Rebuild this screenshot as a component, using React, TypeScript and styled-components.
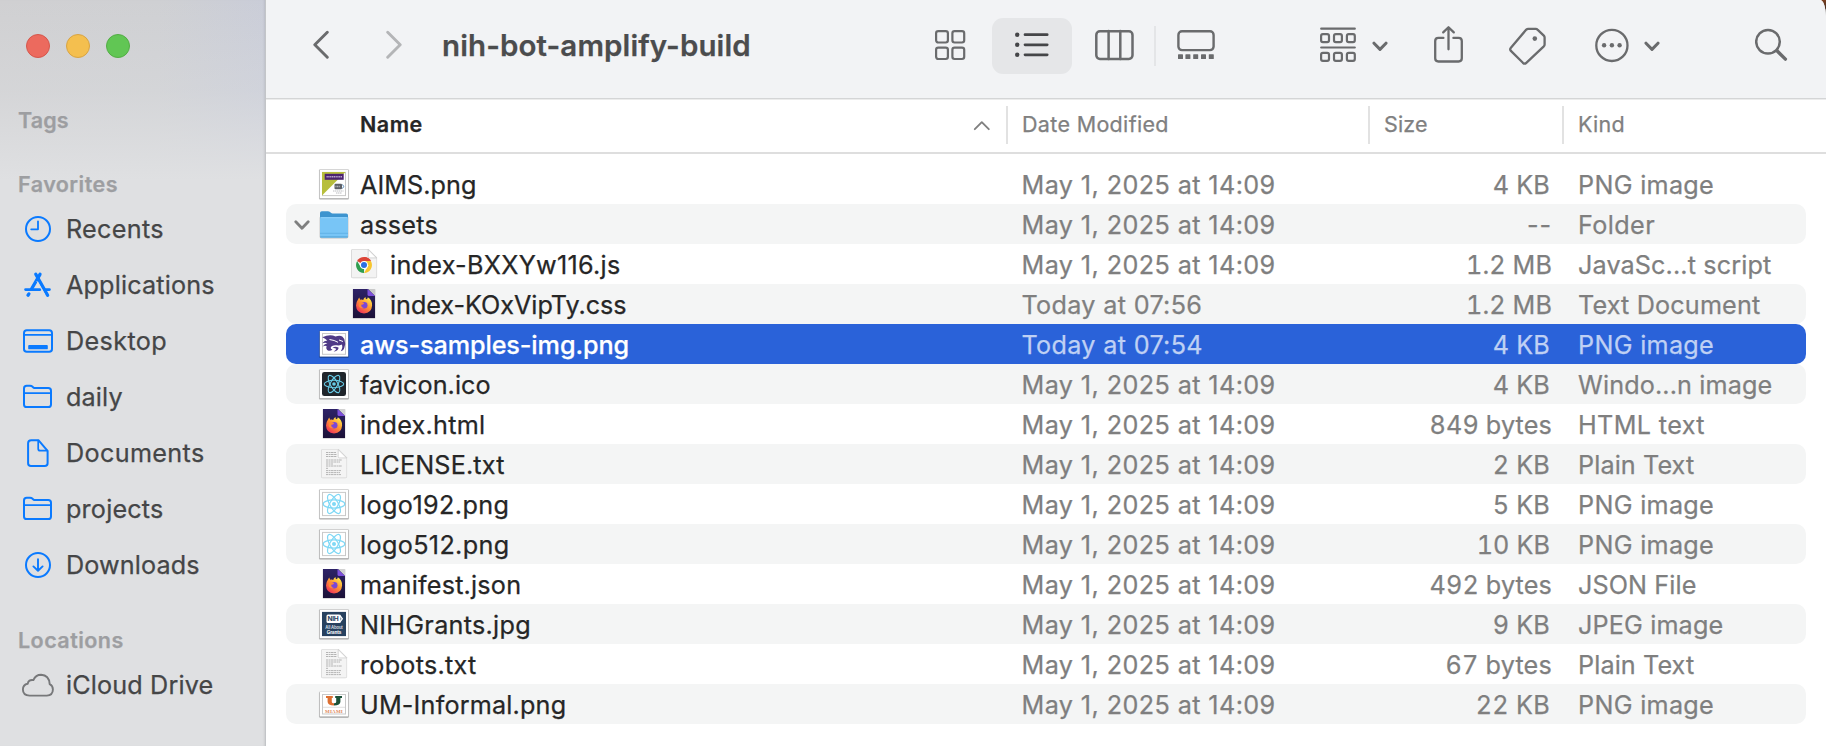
import React from "react";
import styled, { createGlobalStyle, css } from "styled-components";

const GlobalStyle = createGlobalStyle`
  * { box-sizing: border-box; }
  html, body { margin: 0; padding: 0; }
  body { overflow: hidden; font-family: Inter, "Liberation Sans", sans-serif; -webkit-text-stroke: 0.25px currentColor; }
  svg { display: block; flex: none; }
  svg text { -webkit-text-stroke: 0; }
`;

const Backdrop = styled.div`
  width: 100vw;
  height: 100vh;
  background: linear-gradient(#7d4122 0, #2a2522 12px, #cfcfcf 40px);
`;

const Window = styled.div`
  display: flex;
  height: 100%;
  background: #fff;
  border-top-right-radius: 6px 17px;
  overflow: hidden;
`;

/* ---------- Sidebar ---------- */

const Sidebar = styled.aside`
  flex: none;
  width: 266px;
  padding-top: 34px;
  border-right: 1px solid #c3c5c8;
  background:
    linear-gradient(180deg, rgba(223, 225, 227, 0) 0, rgba(223, 225, 227, 0.3) 90px, #dfe0e2 180px),
    linear-gradient(90deg, #d0d0d2 0, #cfd0d3 60%, #cacdd8 100%);
  box-shadow: inset -2px 0 2px -1px rgba(0, 0, 0, 0.08);
`;

const TrafficLights = styled.div`
  display: flex;
  gap: 16px;
  padding-left: 26px;
  margin-bottom: 45px;
`;

const Light = styled.span<{ $fill: string; $edge: string }>`
  width: 24px;
  height: 24px;
  border-radius: 50%;
  background: ${(p) => p.$fill};
  border: 1px solid ${(p) => p.$edge};
`;

const SectionLabel = styled.div<{ $ls: number }>`
  height: 34px;
  padding-left: 18px;
  font-size: 21.5px;
  font-weight: 600;
  line-height: 34px;
  letter-spacing: ${(p) => p.$ls}px;
  color: #9d9ea1;
`;

const Section = styled.section<{ $gap: number }>`
  margin-bottom: ${(p) => p.$gap}px;
`;

const SidebarItem = styled.div<{ $ls: number }>`
  display: flex;
  align-items: center;
  height: 56px;
  padding-left: 20px;
  gap: 10px;
  font-size: 25.2px;
  letter-spacing: ${(p) => p.$ls}px;
  color: #454647;
  white-space: nowrap;
`;

/* ---------- Toolbar ---------- */

const Main = styled.main`
  flex: 1;
  min-width: 0;
  display: flex;
  flex-direction: column;
`;

const Toolbar = styled.header`
  display: flex;
  align-items: center;
  height: 100px;
  padding: 0 38px 7px 47px;
  background: #f2f3f5;
  border-bottom: 1px solid #ececec;
  box-shadow: inset 0 -1px 0 #d4d5d6;
  color: #6a6b6d;
`;

const Title = styled.h1`
  flex: 1;
  margin: 0 0 0 40px;
  padding-bottom: 2px;
  font-size: 29.5px;
  font-weight: 600;
  letter-spacing: 0.1px;
  color: #4b4c4d;
`;

const Tool = styled.span<{ $ml?: number; $dim?: boolean }>`
  display: flex;
  margin-left: ${(p) => p.$ml ?? 0}px;
  ${(p) => p.$dim && css`color: #b4b5b7;`}
`;

const ActiveTool = styled.span`
  display: flex;
  align-items: center;
  justify-content: center;
  width: 80px;
  height: 56px;
  margin-left: 26px;
  border-radius: 11px;
  background: #e5e6e8;
  color: #454648;
`;

const ToolDivider = styled.span`
  width: 2px;
  height: 40px;
  margin-left: 20px;
  background: #e4e5e7;
`;

/* ---------- List ---------- */

const ColumnHeader = styled.div`
  display: grid;
  grid-template-columns: 740px 362px 194px 1fr;
  height: 54px;
  padding-top: 6px;
  border-bottom: 2px solid #dedede;
  font-size: 21.5px;
  color: #808080;
`;

const HeaderCell = styled.div<{ $ls: number; $first?: boolean }>`
  display: flex;
  align-items: center;
  justify-content: space-between;
  height: 38px;
  padding-left: 14px;
  padding-bottom: 3px;
  border-left: 2px solid #e2e2e2;
  letter-spacing: ${(p) => p.$ls}px;
  ${(p) =>
    p.$first &&
    css`
      padding-left: 94px;
      padding-right: 15px;
      border-left: 0;
      font-weight: 600;
      color: #262626;
    `}
`;

const Rows = styled.div`
  padding: 10px 20px 0 20px;
`;

const Row = styled.div<{ $alt: boolean; $selected?: boolean }>`
  display: grid;
  grid-template-columns: 735.5px 340px 190.5px 26px 1fr;
  height: 40px;
  border-radius: 10px;
  font-size: 25.2px;
  line-height: 42px;
  white-space: nowrap;
  color: #7f7f7f;
  background: ${(p) => (p.$alt ? "#f4f5f5" : "transparent")};
  ${(p) =>
    p.$selected &&
    css`
      background: #2a62d9;
      color: #bfd0f4;
    `}
`;

const NameCell = styled.div<{ $ls: number; $nested?: boolean; $selected?: boolean }>`
  display: flex;
  height: 40px;
  padding-left: ${(p) => (p.$nested ? 38 : 8)}px;
  letter-spacing: ${(p) => p.$ls}px;
  font-weight: ${(p) => (p.$selected ? 500 : 400)};
  color: ${(p) => (p.$selected ? "#fff" : "#262626")};
`;

const Disclosure = styled.span`
  width: 16px;
  margin: 12px 8px 0 0;
`;

const FileIcon = styled.span`
  width: 32px;
  margin: 4px 10px 0 0;
`;

const Cell = styled.span<{ $ls: number }>`
  letter-spacing: ${(p) => p.$ls}px;
`;

const SizeCell = styled(Cell)<{ $inset: number; $tabular: boolean }>`
  padding-right: ${(p) => p.$inset}px;
  text-align: right;
  font-variant-numeric: ${(p) => (p.$tabular ? "tabular-nums" : "normal")};
`;

/* ---------- Toolbar glyphs ---------- */

type GlyphProps = { w: number; sw?: number; children: React.ReactNode };

const Glyph = ({ w, sw = 2.4, children }: GlyphProps) => (
  <svg
    width={w}
    height={48}
    viewBox={`0 0 ${w} 48`}
    fill="none"
    stroke="currentColor"
    strokeWidth={sw}
    strokeLinecap="round"
    strokeLinejoin="round"
  >
    {children}
  </svg>
);

const BackGlyph = () => (
  <Glyph w={16} sw={2.9}><path d="M14.3 10.3L1.8 22.700l12.5 12.5" /></Glyph>
);
const ForwardGlyph = () => (
  <Glyph w={16} sw={2.9}><path d="M1.7 10.3L14.2 22.700L1.7 35.200" /></Glyph>
);
const GridGlyph = () => (
  <Glyph w={31} sw={2.2}>
    <rect x="1.1" y="9.1" width="11.8" height="11.4" rx="2.2" />
    <rect x="17.4" y="9.1" width="11.8" height="11.4" rx="2.2" />
    <rect x="1.1" y="25.6" width="11.8" height="11.4" rx="2.2" />
    <rect x="17.4" y="25.6" width="11.8" height="11.4" rx="2.2" />
  </Glyph>
);
const ListGlyph = () => (
  <Glyph w={34} sw={2.7}>
    {[12.7, 22.8, 32.8].map((y) => (
      <React.Fragment key={y}>
        <circle cx="2.2" cy={y} r="2.2" fill="currentColor" stroke="none" />
        <path d={`M10 ${y}h22.2`} />
      </React.Fragment>
    ))}
  </Glyph>
);
const ColumnsGlyph = () => (
  <Glyph w={39} sw={2.5}>
    <rect x="1.3" y="9.3" width="36.2" height="27.6" rx="3.6" />
    <path d="M13.6 9v28M25.3 9v28" />
  </Glyph>
);
const GalleryGlyph = () => (
  <Glyph w={38} sw={2.4}>
    <rect x="1.4" y="9.3" width="35.2" height="18.8" rx="3.6" />
    {[1, 8.4, 16.2, 24, 31.8].map((x) => (
      <rect key={x} x={x} y="32.2" width="5" height="4.8" rx="0.6" fill="currentColor" stroke="none" />
    ))}
  </Glyph>
);
const GroupGlyph = () => (
  <Glyph w={36} sw={2.2}>
    <path d="M1.2 6.7h33.6M1.2 25.5h33.6" />
    {[12.1, 30.8].map((y) =>
      [1.1, 14, 26.9].map((x) => (
        <rect key={`${x}-${y}`} x={x} y={y} width="7.9" height="8" rx="1.8" />
      )),
    )}
  </Glyph>
);
const ChevronGlyph = () => (
  <Glyph w={16} sw={3}><path d="M2 21.2l6 6.2l6-6.2" /></Glyph>
);
const ShareGlyph = () => (
  <Glyph w={29} sw={2.3}>
    <path d="M9.4 15.9H4.400q-3.200 0-3.200 3.200v17.200q0 3.200 3.200 3.200h20.200q3.200 0 3.200-3.200V19.100q0-3.200-3.200-3.200h-5.200" />
    <path d="M14.5 27.3V5.6M9.200 10.4l5.3-5.2l5.3 5.2" />
  </Glyph>
);
const TagGlyph = () => (
  <Glyph w={37} sw={2.3}>
    <path d="M19.1 6.9h7.7q1 0 1.7.7l6.300 6q.8.8.8 1.8v7q0 1.1-.8 1.900L17.300 40.8q-1.7 1.6-3.4 0L1.900 28.900q-1.4-1.6 0-3.200L17.300 7.6q.8-.7 1.8-.7z" />
    <circle cx="25.8" cy="16.6" r="2.3" fill="currentColor" stroke="none" />
  </Glyph>
);
const MoreGlyph = () => (
  <Glyph w={34} sw={2.3}>
    <circle cx="16.9" cy="23.4" r="15.6" />
    {[9.1, 16.9, 24.6].map((x) => (
      <circle key={x} cx={x} cy="23.200" r="2.2" fill="currentColor" stroke="none" />
    ))}
  </Glyph>
);
const SearchGlyph = () => (
  <Glyph w={33} sw={2.5}>
    <circle cx="13" cy="19.8" r="11.8" />
    <path d="M22 28.8l8.400 8.300" strokeWidth="3.4" />
  </Glyph>
);

/* ---------- Sidebar glyphs ---------- */

const SideGlyph = ({ children, color = "#0a7aff" }: { children: React.ReactNode; color?: string }) => (
  <svg width="36" height="32" viewBox="0 0 36 32" fill="none" stroke={color} strokeWidth="2" strokeLinecap="round" strokeLinejoin="round">
    {children}
  </svg>
);

const ClockGlyph = () => (
  <SideGlyph>
    <circle cx="18" cy="16" r="12" />
    <path d="M18 8.3V16.3H11.2" strokeWidth="1.8" />
  </SideGlyph>
);
const AppsGlyph = () => (
  <SideGlyph>
    <path d="M15.8 5.3L27.6 26.2" strokeWidth="3.3" />
    <path d="M20 5.3L11.5 20" strokeWidth="3.3" />
    <path d="M5.6 20.6h14.4M25.8 20.6h3.6" strokeWidth="2.9" />
    <path d="M8.9 24.9l-.9 1.3" strokeWidth="3.3" />
    <path d="M19 11.5l7 12" stroke="#dfe0e2" strokeWidth="1" transform="translate(-1.9 1.1)" />
  </SideGlyph>
);
const DesktopGlyph = () => (
  <SideGlyph>
    <rect x="4" y="5.2" width="28" height="21.6" rx="2.8" />
    <path d="M4 9.9h28" strokeWidth="1.6" />
    <rect x="8.2" y="20" width="19.6" height="4.3" rx="0.9" fill="#0a7aff" stroke="none" />
  </SideGlyph>
);
const FolderGlyph = () => (
  <SideGlyph>
    <path d="M4 23.4V7.4q0-2.7 2.7-2.7h3.4q1.3 0 2.2.8l1 .9q.8.7 2 .7h12.9q2.8 0 2.8 2.7v13.6q0 2.7-2.8 2.7H6.7q-2.7 0-2.7-2.7z" />
    <path d="M4 12.1h27" strokeWidth="1.6" />
  </SideGlyph>
);
const DocumentGlyph = () => (
  <SideGlyph>
    <path d="M18.4 3.2h-7.1q-3.2 0-3.2 3v20q0 2.8 2.9 2.8h13.7q2.9 0 2.9-2.8V13.8L18.4 3.2z" />
    <path d="M18.2 3.5v8.2q0 2 2 2h7" strokeWidth="1.7" />
  </SideGlyph>
);
const DownloadGlyph = () => (
  <SideGlyph>
    <circle cx="18" cy="16" r="12" />
    <path d="M18 10.2v11.3M13.4 17.4l4.6 4.4l4.6-4.4" strokeWidth="1.9" />
  </SideGlyph>
);
const CloudGlyph = () => (
  <SideGlyph color="#77787a">
    <path d="M9.6 26.6q-6.7-.2-6.7-6q0-4.8 4.8-5.8q.7-4.5 5.7-3.7q2.2-5.3 7.7-5.3q7.900.3 8.600 9.300q3.200 1.600 3.200 5.500q0 5.700-6.100 6z" strokeWidth="1.9" />
  </SideGlyph>
);

/* ---------- File icons ---------- */

const FileSvg = ({ children }: { children: React.ReactNode }) => (
  <svg width="32" height="32" viewBox="0 0 32 32" fill="none">{children}</svg>
);

const Frame = ({ y = 1.7, h = 28.6 }: { y?: number; h?: number }) => (
  <>
    <rect x="0.9" y={y - 0.5} width="30.2" height={h + 1.9} rx="1" fill="#000" opacity="0.12" />
    <rect x="1.4" y={y - 0.1} width="29.2" height={h + 1} rx="0.8" fill="#000" opacity="0.3" />
    <rect x="1.8" y={y} width="28.4" height={h} fill="#fff" />
  </>
);

const AimsIcon = () => (
  <FileSvg>
    <Frame />
    <rect x="4.5" y="4.4" width="23" height="23.2" stroke="#c9c9c9" />
    <path d="M4 4h23.5L4 27.5z" fill="#b7be3c" />
    <rect x="6.7" y="5.8" width="19" height="6" fill="#4c2370" />
    <path d="M8.5 8.8h15.5" stroke="#b9a6cc" strokeWidth="1.4" strokeDasharray="1.3 .5" />
    <rect x="16.5" y="15.8" width="7.5" height="5.4" rx="1" fill="#5d6067" />
    <path d="M17.5 18.5h4.5" stroke="#b9bbc0" strokeWidth="1.5" strokeDasharray="1 .6" />
    <path d="M24.5 16.5l1.2 2l-1.2 2" stroke="#5588b8" />
    <path d="M15 23h10.5M18 25h5.5" stroke="#a9abb0" strokeWidth=".8" strokeDasharray="1.5 .5" />
  </FileSvg>
);

const AssetsFolderIcon = () => (
  <FileSvg>
    <rect x="1.6" y="8" width="28.8" height="22.6" rx="1.8" fill="#000" opacity=".22" />
    <path d="M2 5q0-1.8 1.8-1.8h6.2q1 0 1.7.6l1.2 1q.7.6 1.7.6h13.6q1.8 0 1.8 1.8V14H2z" fill="#3d94cf" />
    <path d="M2 10.6q0-1.5 1.5-1.5h25q1.5 0 1.5 1.5V28q0 1.7-1.7 1.7H3.7Q2 29.7 2 28z" fill="#78c5f6" />
    <path d="M2.4 9.7h27.2" stroke="#93d3fa" strokeWidth=".8" />
    <path d="M2 25.3h28" stroke="#5fb0e4" strokeWidth=".9" />
    <path d="M2.2 28.9h27.6" stroke="#58a8dc" strokeWidth="1.2" />
  </FileSvg>
);

const ChromeDocIcon = () => (
  <FileSvg>
    <path d="M3 2.6q0-1.7 1.7-1.7h15.9l8.5 8.7v19q0 1.7-1.7 1.7H4.7Q3 30.3 3 28.6z" fill="#cfcfcf" />
    <path d="M3.7 2.8q0-1.2 1.2-1.2h15.3l8.3 8.3v18.5q0 1.2-1.2 1.2H4.9q-1.2 0-1.2-1.2z" fill="#f3f3f3" />
    <path d="M20.2 1.6v7q0 1.3 1.3 1.3h7z" fill="#fff" stroke="#c4c4c4" strokeWidth=".7" />
    <path d="M16 17L9.1 13A8 8 0 0 1 22.9 13z" fill="#dc4437" />
    <path d="M16 25L19.5 19L22.9 13A8 8 0 0 1 16 25z" fill="#f7c62f" />
    <path d="M16 17h6.9V13H16z" fill="#f7c62f" />
    <path d="M9.1 13l3.5 6L16 21v4A8 8 0 0 1 9.1 13z" fill="#2f9e50" />
    <path d="M16 9a8 8 0 0 1 6.9 4H16z" fill="#dc4437" />
    <circle cx="16" cy="17" r="3.9" fill="#fff" />
    <circle cx="16" cy="17" r="3" fill="#2b6fe3" />
  </FileSvg>
);

const FirefoxDocIcon = () => (
  <FileSvg>
    <defs>
      <linearGradient id="ffDoc" x1="0" y1="0" x2="0" y2="1">
        <stop offset="0" stopColor="#2d2266" />
        <stop offset="1" stopColor="#1c1238" />
      </linearGradient>
      <linearGradient id="ffFlame" x1="0.85" y1="0.05" x2="0.2" y2="0.95">
        <stop offset="0" stopColor="#fff04e" />
        <stop offset="0.45" stopColor="#ff9833" />
        <stop offset="1" stopColor="#f0305a" />
      </linearGradient>
    </defs>
    <rect x="4.6" y="1" width="22.8" height="29.8" rx=".8" fill="#000" opacity=".18" />
    <path d="M5 1h15l7 7v22H5z" fill="url(#ffDoc)" />
    <path d="M19.5 1v5.5q0 1.5 1.5 1.5h6z" fill="#7c4fdc" />
    <path d="M10 11.5q.8-1.3 1.2-2l1 2.2q1.7-.6 3 .2q.5-2 2.3-3q-.3 1.6 1.2 2.4q1.2-.8 1.1-2q4.5 2.7 4.3 8.2q-.6 7.7-8.1 7.9q-7.6-.3-8-7.9q.1-3.5 2-6z" fill="url(#ffFlame)" />
    <circle cx="16.2" cy="17.2" r="3.3" fill="#7b46d8" />
    <path d="M11 14.5q3.3-1 5.2.7q-1 1.6-2.9 1.6q-.3 2.6 2.6 3.3q-4.3.7-5.3-2.6z" fill="#ff8a36" />
  </FileSvg>
);

const WildcatIcon = () => (
  <FileSvg>
    <Frame y={3} h={25.6} />
    <rect x="4.5" y="5.5" width="23" height="20.8" stroke="#c9c9c9" />
    <path d="M4.3 9.2Q12 5.6 17.5 8.5q4.5-1.6 7 .2q2.6 2.3 2.3 4.8q1.2 2.6-.4 6q-.8 3.3-3.6 3.8q2.5-4.3.9-6.7q-2.4 1.2-5 .7q-3.9-.7-5.9 1.7q-.6 2 1.7 2.6q-1.5 1.5-4 1.2q-3.2-1.8-1.8-4.6q-1.9-.9-4.2.6q1.6-3 4.9-3.6q-2.3-.9-5 .1q1.6-2.5 4.9-2.7q-2-2.3-5-3.4z" fill="#4f3a86" />
    <path d="M14.5 19.5q3.2-1.6 6.2.2q-1 3.8-5.200 3.800q2.400-1 2.800-2.800z" fill="#4f3a86" />
    <path d="M11.5 11.5q5 .6 8.5 2.8M21 12l4 1.5" stroke="#fff" strokeWidth="1" />
  </FileSvg>
);

const Atom = ({ color }: { color: string }) => (
  <g stroke={color} strokeWidth="1.2">
    <ellipse cx="16" cy="16" rx="10.8" ry="4.1" />
    <ellipse cx="16" cy="16" rx="10.8" ry="4.1" transform="rotate(60 16 16)" />
    <ellipse cx="16" cy="16" rx="10.8" ry="4.1" transform="rotate(120 16 16)" />
    <circle cx="16" cy="16" r="2" fill={color} stroke="none" />
  </g>
);

const FaviconIcon = () => (
  <FileSvg>
    <Frame />
    <rect x="4" y="3.9" width="24" height="24.2" rx="2.4" fill="#20252b" />
    <g transform="translate(1.6 1.6) scale(.9)"><Atom color="#67cbe6" /></g>
  </FileSvg>
);

const ReactIcon = () => (
  <FileSvg>
    <Frame />
    <rect x="4.5" y="4.4" width="23" height="23.2" stroke="#c9c9c9" />
    <Atom color="#7fd8f5" />
  </FileSvg>
);

const TextDocIcon = () => (
  <FileSvg>
    <path d="M3 2.6q0-1.7 1.7-1.7h15.9l8.5 8.7v19q0 1.7-1.7 1.7H4.7Q3 30.3 3 28.6z" fill="#d4d4d4" />
    <path d="M3.7 2.8q0-1.2 1.2-1.2h15.3l8.3 8.3v18.5q0 1.2-1.2 1.2H4.9q-1.2 0-1.2-1.2z" fill="#f4f4f4" />
    <path d="M20.2 1.6v7q0 1.3 1.3 1.3h7z" fill="#fff" stroke="#c8c8c8" strokeWidth=".7" />
    <g stroke="#b4b4b4" strokeWidth="1" strokeDasharray="2.3 .5 1.4 .4 3 .5">
      <path d="M8 4.5h10M8 6.5h11M8 8.5h10.5" />
      <path d="M8 12h16M8 14h14M8 16h7M8 18h16M8 20.3h2M8 22.6h15M8 24.6h14M8 26.6h15" />
    </g>
  </FileSvg>
);

const NihIcon = () => (
  <FileSvg>
    <Frame />
    <rect x="4" y="3.9" width="24" height="24.2" fill="#27415f" />
    <rect x="8.5" y="6.5" width="14" height="8.6" rx="1.5" fill="#fff" />
    <path d="M21.5 7l2.8 3.8l-2.8 3.8" stroke="#fff" strokeWidth="1.3" />
    <text x="9.4" y="13.3" fontSize="6.6" fontWeight="700" fill="#27415f" fontFamily="Inter, sans-serif" textLength="11.5">NIH</text>
    <text x="16" y="21" fontSize="4.2" fontWeight="700" fill="#c6cfda" textAnchor="middle" fontFamily="Inter, sans-serif" letterSpacing="-0.15">All About</text>
    <text x="16" y="25.8" fontSize="4.6" fontWeight="700" fill="#fff" textAnchor="middle" fontFamily="Inter, sans-serif" letterSpacing="-0.1">Grants</text>
  </FileSvg>
);

const MiamiIcon = () => (
  <FileSvg>
    <Frame y={4} h={24.5} />
    <rect x="4.5" y="6.5" width="23" height="19.5" stroke="#c9c9c9" />
    <path d="M8 8h6.800v2h-1v4q0 1.200 2.200 1.200v2.300q-6.400 0-6.400-3.700V10H8z" fill="#dd6f31" />
    <path d="M24 8h-6.800v2h1v4q0 1.200-2.200 1.200v2.300q6.400 0 6.400-3.700V10H24z" fill="#1c5239" />
    <path d="M5 19.3h22" stroke="#d3d3d3" strokeWidth=".7" />
    <text x="16" y="24.7" fontSize="5" fill="#e08a5c" textAnchor="middle" fontFamily="Liberation Serif, serif" fontWeight="700">MIAMI</text>
  </FileSvg>
);

const DisclosureArrow = () => (
  <svg width="16" height="16" viewBox="0 0 16 16" fill="none" stroke="#7e7f7f" strokeWidth="2.8" strokeLinecap="round" strokeLinejoin="round">
    <path d="M1.8 5.8l6.2 6.4l6.2-6.4" />
  </svg>
);

const SortArrow = () => (
  <svg width="18" height="16" viewBox="0 0 18 16" fill="none" stroke="#808080" strokeWidth="1.9" strokeLinecap="round" strokeLinejoin="round">
    <path d="M1.8 13.2L8.8 6.2l7 7" />
  </svg>
);

/* ---------- Data ---------- */

type FileRow = {
  name: string;
  ls: number;
  icon: React.ComponentType;
  date?: string;
  size: string;
  sizeLs: number;
  inset: number;
  kind: string;
  kindLs: number;
  nested?: boolean;
  open?: boolean;
  selected?: boolean;
};

const files: FileRow[] = [
  { name: "AIMS.png", ls: 0.06, icon: AimsIcon, size: "4 KB", sizeLs: 0.2, inset: 2, kind: "PNG image", kindLs: 0.3 },
  { name: "assets", ls: 0.2, icon: AssetsFolderIcon, size: "--", sizeLs: 0.9, inset: 0, kind: "Folder", kindLs: 0.4, open: true },
  { name: "index-BXXYw116.js", ls: 0.28, icon: ChromeDocIcon, size: "1.2 MB", sizeLs: 0.1, inset: 0, kind: "JavaSc...t script", kindLs: 0.12, nested: true },
  { name: "index-KOxVipTy.css", ls: -0.04, icon: FirefoxDocIcon, date: "Today at 07:56", size: "1.2 MB", sizeLs: 0.1, inset: 0, kind: "Text Document", kindLs: 0.15, nested: true },
  { name: "aws-samples-img.png", ls: -0.1, icon: WildcatIcon, date: "Today at 07:54", size: "4 KB", sizeLs: 0.2, inset: 2, kind: "PNG image", kindLs: 0.3, selected: true },
  { name: "favicon.ico", ls: 0.04, icon: FaviconIcon, size: "4 KB", sizeLs: 0.2, inset: 2, kind: "Windo...n image", kindLs: 0.12 },
  { name: "index.html", ls: 0.25, icon: FirefoxDocIcon, size: "849 bytes", sizeLs: 0.15, inset: 0, kind: "HTML text", kindLs: 0.36 },
  { name: "LICENSE.txt", ls: 0.16, icon: TextDocIcon, size: "2 KB", sizeLs: 0.2, inset: 2, kind: "Plain Text", kindLs: 0.1 },
  { name: "logo192.png", ls: 0.38, icon: ReactIcon, size: "5 KB", sizeLs: 0.2, inset: 2, kind: "PNG image", kindLs: 0.3 },
  { name: "logo512.png", ls: 0.35, icon: ReactIcon, size: "10 KB", sizeLs: 0.1, inset: 2, kind: "PNG image", kindLs: 0.3 },
  { name: "manifest.json", ls: 0.2, icon: FirefoxDocIcon, size: "492 bytes", sizeLs: 0.15, inset: 0, kind: "JSON File", kindLs: 0.1 },
  { name: "NIHGrants.jpg", ls: 0.28, icon: NihIcon, size: "9 KB", sizeLs: 0.2, inset: 2, kind: "JPEG image", kindLs: 0.14 },
  { name: "robots.txt", ls: 0.25, icon: TextDocIcon, size: "67 bytes", sizeLs: 0.2, inset: 0, kind: "Plain Text", kindLs: 0.1 },
  { name: "UM-Informal.png", ls: 0.18, icon: MiamiIcon, size: "22 KB", sizeLs: 0.3, inset: 2, kind: "PNG image", kindLs: 0.3 },
];

const favorites: { label: string; ls: number; icon: React.ComponentType }[] = [
  { label: "Recents", ls: 0.28, icon: ClockGlyph },
  { label: "Applications", ls: 0.15, icon: AppsGlyph },
  { label: "Desktop", ls: 0.35, icon: DesktopGlyph },
  { label: "daily", ls: 0.15, icon: FolderGlyph },
  { label: "Documents", ls: 0.34, icon: DocumentGlyph },
  { label: "projects", ls: 0.18, icon: FolderGlyph },
  { label: "Downloads", ls: 0.12, icon: DownloadGlyph },
];

export default function App() {
  return (
    <>
      <GlobalStyle />
      <Backdrop>
        <Window>
          <Sidebar>
            <TrafficLights>
              <Light $fill="#ec6a5e" $edge="#d5574c" />
              <Light $fill="#f4bf4f" $edge="#d8a444" />
              <Light $fill="#61c654" $edge="#53ad45" />
            </TrafficLights>
            <Section $gap={30}>
              <SectionLabel $ls={0.1}>Tags</SectionLabel>
            </Section>
            <Section $gap={30}>
              <SectionLabel $ls={0.46}>Favorites</SectionLabel>
              {favorites.map(({ label, ls, icon: Icon }) => (
                <SidebarItem key={label} $ls={ls}>
                  <Icon />
                  {label}
                </SidebarItem>
              ))}
            </Section>
            <Section $gap={0}>
              <SectionLabel $ls={0.46}>Locations</SectionLabel>
              <SidebarItem $ls={0.14}>
                <CloudGlyph />
                iCloud Drive
              </SidebarItem>
            </Section>
          </Sidebar>

          <Main>
            <Toolbar>
              <Tool><BackGlyph /></Tool>
              <Tool $ml={57} $dim><ForwardGlyph /></Tool>
              <Title>nih-bot-amplify-build</Title>
              <Tool><GridGlyph /></Tool>
              <ActiveTool><ListGlyph /></ActiveTool>
              <Tool $ml={23}><ColumnsGlyph /></Tool>
              <ToolDivider />
              <Tool $ml={21}><GalleryGlyph /></Tool>
              <Tool $ml={105}><GroupGlyph /></Tool>
              <Tool $ml={16}><ChevronGlyph /></Tool>
              <Tool $ml={46}><ShareGlyph /></Tool>
              <Tool $ml={46}><TagGlyph /></Tool>
              <Tool $ml={49}><MoreGlyph /></Tool>
              <Tool $ml={15}><ChevronGlyph /></Tool>
              <Tool $ml={95}><SearchGlyph /></Tool>
            </Toolbar>

            <ColumnHeader>
              <HeaderCell $ls={0.5} $first>
                Name
                <SortArrow />
              </HeaderCell>
              <HeaderCell $ls={0.33}>Date Modified</HeaderCell>
              <HeaderCell $ls={0.15}>Size</HeaderCell>
              <HeaderCell $ls={0.27}>Kind</HeaderCell>
            </ColumnHeader>

            <Rows>
              {files.map((f, i) => (
                <Row key={f.name} $alt={i % 2 === 1} $selected={f.selected}>
                  <NameCell $ls={f.ls} $nested={f.nested} $selected={f.selected}>
                    <Disclosure>{f.open && <DisclosureArrow />}</Disclosure>
                    <FileIcon><f.icon /></FileIcon>
                    {f.name}
                  </NameCell>
                  <Cell $ls={f.date ? 0.32 : 0.4}>{f.date ?? "May 1, 2025 at 14:09"}</Cell>
                  <SizeCell $ls={f.sizeLs} $inset={f.inset} $tabular={f.size !== "--"}>{f.size}</SizeCell>
                  <span />
                  <Cell $ls={f.kindLs}>{f.kind}</Cell>
                </Row>
              ))}
            </Rows>
          </Main>
        </Window>
      </Backdrop>
    </>
  );
}
